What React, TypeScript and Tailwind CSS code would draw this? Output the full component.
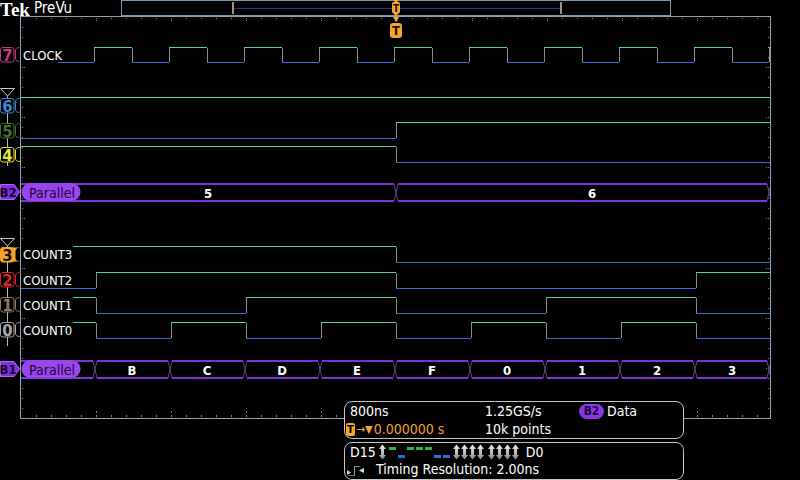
import React from "react";

const GREEN = "#4cd896";
const BLUE = "#2f6fd6";
const EDGE = "#8a8a8a";
const BUS = "#7f2fdc";
const PILL = "#9a46ee";
const TICK = "#7d8ea2";
const ORANGE = "#f4a52a";

type Seg = [number, number, number];

// turn a start level and a list of edge columns into level segments
const segsFrom = (first: number, edges: number[]): Seg[] => {
  const pts = [21, ...edges, 770];
  return pts.slice(0, -1).map((x, i) => [x, pts[i + 1], (first + i) % 2] as Seg);
};

const every = (start: number, step: number, count: number) =>
  Array.from({ length: count }, (_, i) => Math.round(start + step * i));

const clockEdges = Array.from({ length: 19 }, (_, i) =>
  i % 2 === 0 ? 94 + 75 * (i / 2) : 132 + 75 * ((i - 1) / 2)
);

const TRACES = [
  { hi: 47, lo: 62, segs: segsFrom(0, clockEdges) },
  { hi: 97, lo: 113, segs: segsFrom(1, []) },
  { hi: 122, lo: 138, segs: segsFrom(0, [396]) },
  { hi: 146, lo: 162, segs: segsFrom(1, [396]) },
  { hi: 246, lo: 262, segs: segsFrom(1, [396]) },
  { hi: 272, lo: 288, segs: segsFrom(0, [96, 396, 696]) },
  { hi: 297, lo: 313, segs: segsFrom(1, [96, 246, 396, 546, 696]) },
  { hi: 322, lo: 338, segs: segsFrom(1, every(96, 75, 9)) },
];

const LABELS = [
  { text: "CLOCK", y: 47, w: 37 },
  { text: "COUNT3", y: 246, w: 52 },
  { text: "COUNT2", y: 272, w: 52 },
  { text: "COUNT1", y: 297, w: 52 },
  { text: "COUNT0", y: 322, w: 52 },
];

const MARKERS = [
  { y: 47, t: "7", c: "#c2377f" },
  { y: 98, t: "6", c: "#3a86c8" },
  { y: 123, t: "5", c: "#40702f" },
  { y: 147, t: "4", c: "#e6e23c" },
  { y: 247, t: "3", c: ORANGE, filled: true },
  { y: 272, t: "2", c: "#d42a2a" },
  { y: 297, t: "1", c: "#8c7c58" },
  { y: 322, t: "0", c: "#a8a8a8" },
];

function Trace({ hi, lo, segs }: { hi: number; lo: number; segs: Seg[] }) {
  return (
    <g>
      {segs.map(([a, b, l], i) => (
        <line
          key={i}
          x1={a}
          x2={b}
          y1={(l ? hi : lo) + 0.5}
          y2={(l ? hi : lo) + 0.5}
          stroke={l ? GREEN : BLUE}
        />
      ))}
      {segs.slice(1).map(([a], i) => (
        <line key={"e" + i} x1={a + 0.5} x2={a + 0.5} y1={hi + 1} y2={lo} stroke={EDGE} />
      ))}
    </g>
  );
}

function Bus({
  top,
  bot,
  edges,
  values,
}: {
  top: number;
  bot: number;
  edges: number[];
  values: [number, string][];
}) {
  const pts = [21, ...edges, 770];
  const mid = (top + bot) / 2;
  return (
    <g>
      {pts.slice(0, -1).map((a, i) => {
        const b = pts[i + 1];
        const x1 = i === 0 ? a : a + 2;
        const x2 = b - 2;
        if (x2 <= x1) return null;
        return (
          <g key={i}>
            <line x1={x1} x2={x2} y1={top} y2={top} stroke={BUS} strokeWidth={2} />
            <line x1={x1} x2={x2} y1={bot} y2={bot} stroke={BUS} strokeWidth={2} />
          </g>
        );
      })}
      {edges.map((e) => (
        <path
          key={e}
          d={`M${e - 2} ${top} L${e + 2} ${bot} M${e - 2} ${bot} L${e + 2} ${top}`}
          stroke="#54448a"
          fill="none"
        />
      ))}
      <rect x={21.5} y={top - 1} width={59} height={bot - top + 1} rx={9} fill={PILL} />
      <text x={52} y={mid + 5} textAnchor="middle" fontSize={14} fill="#1d0736">
        Parallel
      </text>
      {values.map(([x, v]) => (
        <text key={x} x={x} y={mid + 5} textAnchor="middle" fontSize={13} fontWeight={700} fill="#fff">
          {v}
        </text>
      ))}
    </g>
  );
}

function Ticks() {
  const xs = Array.from({ length: 49 }, (_, i) => i + 1);
  const ys = Array.from({ length: 39 }, (_, i) => i + 1);
  return (
    <g fill={TICK}>
      {xs.map((k) => {
        const x = Math.round(21 + 15.02 * k);
        const major = k % 5 === 0;
        return (
          <g key={k}>
            <rect x={x} y={18} width={1} height={1} />
            {major && <rect x={x} y={20} width={1} height={1} />}
            <rect x={x} y={415} width={1} height={2} />
            {major && <rect x={x} y={411} width={1} height={2} />}
          </g>
        );
      })}
      {ys.map((k) => {
        const y = Math.round(17 + 10.03 * k);
        const major = k % 5 === 0;
        return (
          <g key={k}>
            <rect x={22} y={y} width={1} height={1} />
            {major && <rect x={24} y={y} width={1} height={1} />}
            <rect x={768} y={y} width={1} height={1} />
            {major && <rect x={766} y={y} width={1} height={1} />}
          </g>
        );
      })}
    </g>
  );
}

function Scope() {
  const b1: [number, string][] = [
    [132, "B"],
    [207, "C"],
    [282, "D"],
    [357, "E"],
    [432, "F"],
    [507, "0"],
    [582, "1"],
    [657, "2"],
    [732, "3"],
  ];
  return (
    <svg width={749} height={401} viewBox="21 17 749 401" className="block">
      <Ticks />
      {TRACES.map((t, i) => (
        <Trace key={i} {...t} />
      ))}
      {LABELS.map((l) => (
        <g key={l.text}>
          <rect x={21} y={l.y} width={l.w} height={16} fill="#000" />
          <text x={23} y={l.y + 13} fontSize={13} fill="#fff">
            {l.text}
          </text>
        </g>
      ))}
      <Bus top={184} bot={201} edges={[396, 769]} values={[[208, "5"], [592, "6"]]} />
      <Bus top={361} bot={378} edges={[...every(95, 75, 9), 769]} values={b1} />
    </svg>
  );
}

function Markers() {
  return (
    <svg className="absolute left-0 top-0" width={24} height={420}>
      <line x1={7.5} x2={7.5} y1={95} y2={166} stroke="#b8b8b8" />
      <line x1={7.5} x2={7.5} y1={245} y2={346} stroke="#b8b8b8" />
      <path d="M0.5 88.5 H14.5 L7.5 96 Z" stroke="#c8c8c8" fill="#000" />
      <path d="M0.5 238.5 H14.5 L7.5 246 Z" stroke="#c8c8c8" fill="#000" />
      {MARKERS.map((m) => (
        <g key={m.t} transform={`translate(0 ${m.y})`}>
          {m.filled ? (
            <path d="M13 0.5 H21 C16.5 1 15.5 2 15.5 5 L15.5 11 C15.5 13 16.5 14 21 14.5 H13 Z" fill={m.c} />
          ) : (
            <path
              d="M21 0.5 C16.5 0.5 15.5 1.5 15.5 4 L15.5 11 C15.5 13.5 16.5 14.5 21 14.5"
              stroke={m.c}
              fill="none"
            />
          )}
          <rect
            x={0.5}
            y={0.5}
            width={13.5}
            height={14.5}
            rx={2.5}
            fill={m.filled ? m.c : "#000"}
            stroke={m.c}
          />
          <text
            x={7.3}
            y={13.5}
            textAnchor="middle"
            fontSize={16.5}
            fontWeight={700}
            fill={m.filled ? "#1a1000" : m.c}
          >
            {m.t}
          </text>
        </g>
      ))}
      {[
        { y: 184, t: "B2" },
        { y: 361, t: "B1" },
      ].map((b) => (
        <g key={b.t} transform={`translate(0 ${b.y})`}>
          <path d="M0.5 0.5 H14 L19.5 8 L14 15.5 H0.5 Z" fill={BUS} stroke="#a66cf5" />
          <text x={8} y={13} textAnchor="middle" fontSize={13} fontWeight={700} fill="#14042a">
            {b.t}
          </text>
        </g>
      ))}
    </svg>
  );
}

function Trigger() {
  return (
    <svg className="absolute left-[388px] top-0" width={16} height={40}>
      <path d="M5 0 H11 L8 3 Z" fill={ORANGE} />
      <rect x={4} y={2} width={8} height={11} rx={1.5} fill={ORANGE} />
      <text x={8} y={11.5} textAnchor="middle" fontSize={10} fontWeight={700} fill="#1a1000">
        T
      </text>
      <path d="M5 13 H11 L8 16 Z" fill={ORANGE} />
      <path d="M5 17 H11 L8 22 Z" fill={ORANGE} />
      <rect x={2} y={23} width={12} height={15} rx={3} fill={ORANGE} />
      <text x={8} y={35} textAnchor="middle" fontSize={13} fontWeight={700} fill="#1a1000">
        T
      </text>
    </svg>
  );
}

function UpDown({ x }: { x: number }) {
  return (
    <path
      d={`M${x + 3.5} 0.5 L${x + 7} 5 H${x + 5} V11 H${x + 7} L${x + 3.5} 15.5 L${x} 11 H${x + 2} V5 H${x} Z`}
      fill="url(#ud)"
    />
  );
}

function Bits() {
  const pattern = [1, 0, 1, 1, 1, 0, 0];
  return (
    <svg width={146} height={17} className="block">
      <defs>
        <linearGradient id="ud" x1="0" x2="0" y1="0" y2="1">
          <stop offset="0" stopColor="#f2f2f2" />
          <stop offset="1" stopColor="#8a8a8a" />
        </linearGradient>
      </defs>
      <UpDown x={1} />
      {pattern.map((l, i) => (
        <rect key={i} x={11 + 9 * i} y={l ? 3 : 11} width={7} height={3} fill={l ? "#2fb34a" : "#2d6fd2"} />
      ))}
      {[75, 83, 91, 99, 110, 118, 126, 134].map((x) => (
        <UpDown key={x} x={x} />
      ))}
    </svg>
  );
}

function TimingIcon() {
  return (
    <svg width={20} height={14} className="block">
      <path d="M1 7 L5 9.5 L1 12 Z" fill="#cfcfcf" />
      <line x1={2} x2={8} y1={12.5} y2={12.5} stroke="#2d6fd2" />
      <line x1={8.5} x2={8.5} y1={3} y2={13} stroke="#9a9a9a" />
      <line x1={9} x2={14} y1={3.5} y2={3.5} stroke="#2fb34a" />
      <path d="M18 5 L13 7.5 L18 10 Z" fill="#e0e0e0" />
    </svg>
  );
}

function InfoPanel() {
  return (
    <div className="absolute left-[344px] top-[401px] flex w-[340px] flex-col gap-[3px] text-[14px] leading-[17px]">
      <div className="grid h-[38px] grid-cols-[135px_94px_1fr] rounded-[8px] border border-[#c4c4c4] bg-black px-[5px] pt-[1px]">
        <span>800ns</span>
        <span>1.25GS/s</span>
        <span className="flex items-center gap-[3px]">
          <span className="flex h-[15px] w-[25px] items-center justify-center rounded-full bg-[#8a35e8] text-[12px] font-bold text-[#1a0530]">
            B2
          </span>
          Data
        </span>
        <span className="-ml-[4px] flex items-center text-[#f0a33a]">
          <span className="flex h-[13px] w-[9px] items-center justify-center rounded-[2px] bg-[#f4a52a] text-[11px] font-bold text-black">
            T
          </span>
          <span className="ml-[1px] text-[12px]">→</span>
          <span className="text-[11px]">▼</span>
          <span className="ml-[1px]">0.000000 s</span>
        </span>
        <span>10k points</span>
        <span />
      </div>
      <div className="h-[38px] rounded-[8px] border border-[#c4c4c4] bg-black px-[5px] pt-[1px]">
        <div className="flex items-center">
          <span>D15</span>
          <span className="ml-[2px]">
            <Bits />
          </span>
          <span className="ml-[2px]">D0</span>
        </div>
        <div className="-ml-[4px] flex items-center">
          <TimingIcon />
          <span className="ml-[10px]">Timing Resolution: 2.00ns</span>
        </div>
      </div>
    </div>
  );
}

export default function App() {
  return (
    <div className="relative h-[480px] w-[800px] overflow-hidden bg-black text-white [font-family:'DejaVu_Sans_Condensed','Liberation_Sans_Narrow','DejaVu_Sans',sans-serif]">
      <div className="flex h-[16px] items-start">
        <div className="w-[34px] shrink-0 text-[19px] font-bold leading-[19px] [font-family:'Liberation_Serif',serif]">
          Tek
        </div>
        <div className="w-[87px] shrink-0 text-[15px] leading-[16px]">PreVu</div>
        <div className="h-[16px] w-[550px] border border-[#7d95ad]">
          <div className="ml-[110px] mt-[1px] flex h-[12px] w-[330px] items-center border-x-2 border-[#a3967c]">
            <div className="h-px w-full bg-[#2828a8]" />
          </div>
        </div>
      </div>
      <div className="flex">
        <div className="w-[20px] shrink-0" />
        <div className="h-[403px] w-[751px] border border-[#8ea2b6]">
          <Scope />
        </div>
      </div>
      <Markers />
      <Trigger />
      <InfoPanel />
    </div>
  );
}
